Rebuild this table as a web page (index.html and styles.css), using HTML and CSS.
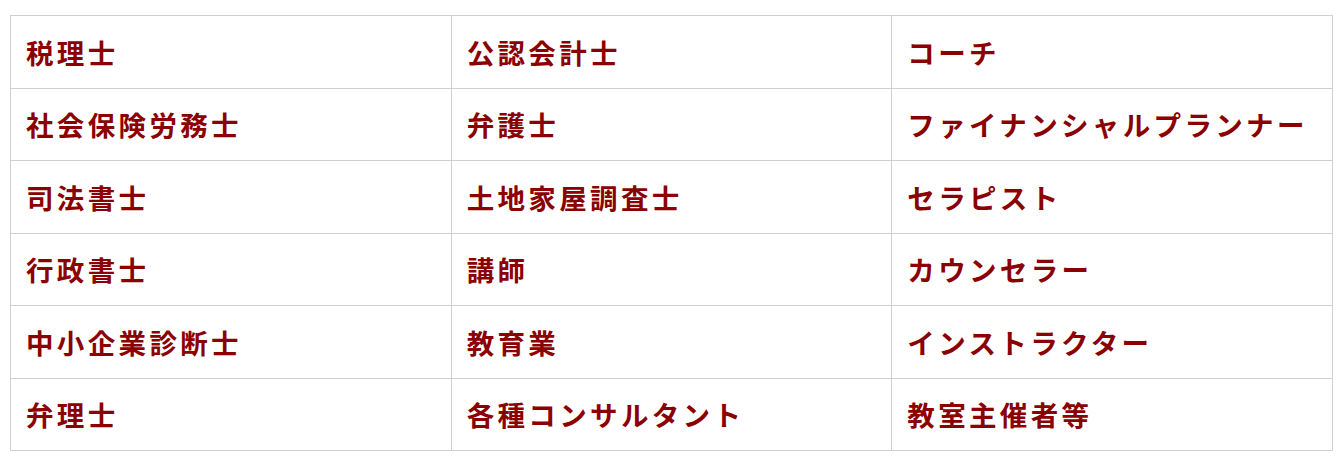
FILE: index.html
```html
<!DOCTYPE html>
<html lang="ja">
<head>
<meta charset="utf-8">
<link rel="stylesheet" href="styles.css">
</head>
<body>
<div class="wrap">
<table class="jobs">
<tr><td>税理士</td><td>公認会計士</td><td>コーチ</td></tr>
<tr><td>社会保険労務士</td><td>弁護士</td><td>ファイナンシャルプランナー</td></tr>
<tr><td>司法書士</td><td>土地家屋調査士</td><td>セラピスト</td></tr>
<tr><td>行政書士</td><td>講師</td><td>カウンセラー</td></tr>
<tr><td>中小企業診断士</td><td>教育業</td><td>インストラクター</td></tr>
<tr><td>弁理士</td><td>各種コンサルタント</td><td>教室主催者等</td></tr>
</table>
</div>
</body>
</html>
```
FILE: styles.css
```css
html, body { margin: 0; padding: 0; background: #fff; }
.wrap { padding: 15px 11px 0 10px; }
.jobs {
  width: 1323px;
  border-collapse: collapse;
  table-layout: fixed;
  font-family: "Noto Sans CJK JP", "Noto Sans", sans-serif;
  font-weight: 700;
  font-size: 27.5px;
  letter-spacing: 3.35px;
  color: #8b0000;
}
.jobs td {
  border: 1px solid #d0d0d0;
  height: 70.5px;
  padding: 1px 0 0 15px;
  vertical-align: middle;
  white-space: nowrap;
  line-height: 1.2;
}
```
